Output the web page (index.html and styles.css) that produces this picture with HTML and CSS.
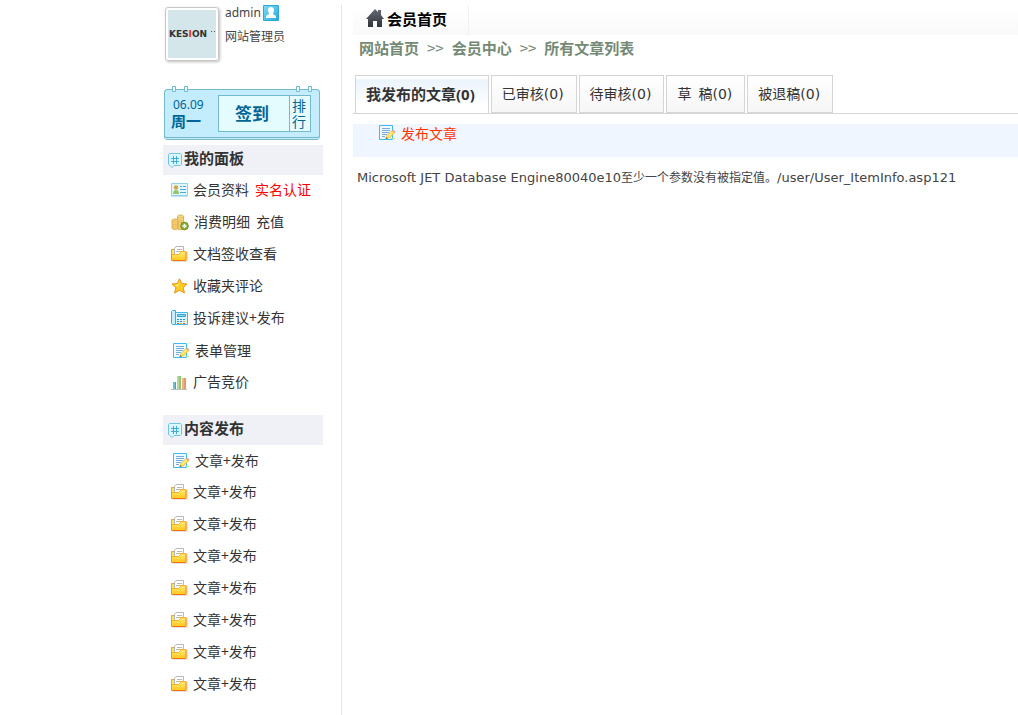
FILE: index.html
```html
<!DOCTYPE html>
<html lang="zh-CN">
<head>
<meta charset="utf-8">
<title>会员中心</title>
<link rel="stylesheet" href="styles.css">
</head>
<body>
<svg class="defs" aria-hidden="true">
  <defs>
    <linearGradient id="gold" x1="0" y1="0" x2="0" y2="1"><stop offset="0" stop-color="#ffef7a"/><stop offset="1" stop-color="#ffc61a"/></linearGradient>
    <linearGradient id="sky" x1="0" y1="0" x2="1" y2="1"><stop offset="0" stop-color="#7fdcf7"/><stop offset="1" stop-color="#27a9dc"/></linearGradient>
    <linearGradient id="slate" x1="0" y1="0" x2="0" y2="1"><stop offset="0" stop-color="#676b75"/><stop offset="1" stop-color="#30333c"/></linearGradient>
  </defs>
  <symbol id="i-hash" viewBox="0 0 14 15">
    <path d="M1.5 .5h11l1 1v10l-1 1H6l-2 2-2-2h-.5l-1-1v-10z" fill="#d9f7fe" stroke="#6fc6e4"/>
    <path d="M5.500 3v8M8.500 3v8M3 5.500h8M3 8.500h8" stroke="#42a9dc" fill="none"/>
  </symbol>
  <symbol id="i-folder" viewBox="0 0 17 16">
    <path d="M2 15.500h14.500V6" stroke="#e2e2e2" fill="none"/>
    <path d="M.5 3.500h4V14h-4z" fill="#ffe45c" stroke="#ff9c1a"/>
    <path d="M3.500 8V2.500l1.500-2h7.500v8h-9z" fill="#fff" stroke="#b3b6bc"/>
    <path d="M6 3.500h5M5 5.500h6" stroke="#b5bac2"/>
    <path d="M.5 8.500h7l2-2v-1h5.500v9H.5z" fill="url(#gold)" stroke="#ffac26"/>
    <path d="M1 14.500h14" stroke="#f8760c"/>
    <path d="M.500 8v6M15 6v8" stroke="#fc9218"/>
  </symbol>
  <symbol id="i-edit" viewBox="0 0 17 16">
    <path d="M.5.500h13v14H.5z" fill="#effaff" stroke="#3bbdf0"/>
    <path d="M3 3.500h8M3 5.500h8M3 7.500h7M3 9.500h5M3 11.500h3" stroke="#7aa9dc"/>
    <path d="M7 13.500l1-3 5-5 2.500 2.500-5 5z" fill="#ffe04a" stroke="#d8ae3c" stroke-width=".6"/>
    <path d="M9 11.500l5-5" stroke="#fff8b8"/>
    <path d="M13 5.500l1-1 2.500 2-1 1.500z" fill="#f0a08c"/>
    <path d="M6.500 14l.8-2 1.500 1.500z" fill="#5b6b36"/>
    <path d="M12 13.500h4" stroke="#b5e58a"/>
  </symbol>
  <symbol id="i-card" viewBox="0 0 17 14">
    <path d="M.5.500h16v12H.5z" fill="#e2f6fd" stroke="#8ed0ed"/>
    <circle cx="5" cy="4.500" r="2.200" fill="#d7a24a"/>
    <path d="M2 11c0-3 1-4 3-4s3 1 3 4z" fill="#97c66a"/>
    <path d="M9 3.500h2M12 3.500h3M9 6.500h6M9 9.500h6" stroke="#45a8de"/>
    <path d="M0 13.500h17" stroke="#c3e3ef"/>
  </symbol>
  <symbol id="i-coins" viewBox="0 0 18 17">
    <path d="M6.500 2.500c0-2 6-2 6 0v10h-6z" fill="#f6d67a" stroke="#d5a04a" stroke-width=".8"/>
    <path d="M1 6.500c0-2 6-2 6 0V14c0 2-6 2-6 0z" fill="#f5cf6c" stroke="#d5a04a" stroke-width=".8"/>
    <path d="M7 9.500c0-2 5-2 5 0V15c0 1-5 1-5 0z" fill="#f5cf6c" stroke="#d5a04a" stroke-width=".8"/>
    <path d="M1 7c1 1.500 5 1.500 6 0M1 9.500c1 1.500 5 1.500 6 0M1 12c1 1.500 5 1.500 6 0M6.500 3c1 1.500 5 1.500 6 0M6.500 5.500c1 1.500 5 1.500 6 0" stroke="#dfb260" stroke-width=".6" fill="none"/>
    <circle cx="13.500" cy="12" r="3.800" fill="#8fb43a" stroke="#6a8e26"/>
    <path d="M13.500 10v4M11.500 12h4" stroke="#fff" stroke-width="1.300"/>
  </symbol>
  <symbol id="i-star" viewBox="0 0 16 16">
    <path d="M8 .8l2.200 4.700 5.300.5-4 3.700 1.500 5.300-5-2.700L3 15l1.500-5.300L.5 6l5.300-.5z" fill="#ffcb22" stroke="#ea9420" stroke-linejoin="round"/>
    <path d="M8 3L6.500 6.500 3 7l3.500 2z" fill="#fff27d"/>
  </symbol>
  <symbol id="i-phone" viewBox="0 0 17 16">
    <path d="M4.500 2.500h12v12h-12z" fill="#ddf5fe" stroke="#42b9ea"/>
    <path d="M1.500.5h3v14h-3l-1-1v-12z" fill="#c8effd" stroke="#34aee4"/>
    <path d="M6.500 4.500h8v2h-8z" fill="#8cd9f6" stroke="#389fd2"/>
    <path d="M6 9.500h2M9 9.500h2M12 9.500h2M6 11.500h2M9 11.500h2" stroke="#2490d0"/>
    <path d="M12 11.500h2" stroke="#f4a825"/><path d="M6 13.500h2M12 13.500h2" stroke="#e8613c"/><path d="M9 13.500h2" stroke="#f0ba35"/>
  </symbol>
  <symbol id="i-chart" viewBox="0 0 17 15">
    <path d="M2 7h3v7H2z" fill="#72bfd8"/><path d="M4 7h1v7H4z" fill="#4ba1c4"/>
    <path d="M6 1h4v13H6z" fill="#b2d99a"/><path d="M8 1h2v13H8z" fill="#8fc678"/>
    <path d="M11 3h4v11h-4z" fill="#f0b088"/><path d="M13 3h2v11h-2z" fill="#e5996b"/>
    <path d="M0 14.500h16" stroke="#bcbcbc"/>
  </symbol>
</svg>

<div class="page">
  <aside class="side">
    <div class="profile">
      <div class="avatar">
        <svg width="48" height="48" viewBox="0 0 48 48" role="img" aria-label="KESION">
          <path d="M0 0h48v48H0z" fill="#d4e6ea"/>
          <text class="logo" x="1" y="27">KES<tspan fill="#e8301f">I</tspan>ON</text>
          <path d="M43 21.500h1M46 21.500h1" stroke="#555"/>
        </svg>
      </div>
      <div class="who">
        <div class="name">admin
          <svg width="16" height="16" viewBox="0 0 16 16" aria-hidden="true">
            <path d="M.5.500h15v15H.5z" fill="url(#sky)" stroke="#2da8d9"/>
            <path d="M5 5c0-4 6-4 6 0 0 2-1 3-1 4l3 2v2H3v-2l3-2c0-1-1-2-1-4z" fill="#fff"/>
          </svg>
        </div>
        <div>网站管理员</div>
      </div>
    </div>

    <div class="sign">
      <svg class="rings" width="156" height="7" viewBox="0 0 156 7" aria-hidden="true">
        <path d="M8.500 5.500v-5h3v5zM20.500 5.500v-5h3v5zM132.500 5.500v-5h3v5zM144.500 5.500v-5h3v5z" fill="#e8fbff" stroke="#76b8cc"/>
      </svg>
      <div class="date"><span>06.09</span><strong>周一</strong></div>
      <button class="checkin" type="button">签到</button>
      <button class="rank" type="button">排行</button>
    </div>

    <nav>
      <h2><svg width="14" height="15"><use href="#i-hash"/></svg>我的面板</h2>
      <ul>
        <li><svg width="17" height="14"><use href="#i-card"/></svg><a href="#">会员资料</a><a class="hot" href="#">实名认证</a></li>
        <li><svg width="18" height="17"><use href="#i-coins"/></svg><a href="#">消费明细</a><a href="#">充值</a></li>
        <li><svg width="17" height="16"><use href="#i-folder"/></svg><a href="#">文档签收查看</a></li>
        <li><svg width="17" height="16"><use href="#i-star"/></svg><a href="#">收藏夹评论</a></li>
        <li><svg width="17" height="16"><use href="#i-phone"/></svg><a href="#">投诉建议+发布</a></li>
        <li class="form"><svg width="17" height="16"><use href="#i-edit"/></svg><a href="#">表单管理</a></li>
        <li><svg width="17" height="15"><use href="#i-chart"/></svg><a href="#">广告竞价</a></li>
      </ul>
      <h2><svg width="14" height="15"><use href="#i-hash"/></svg>内容发布</h2>
      <ul>
        <li class="form"><svg width="17" height="16"><use href="#i-edit"/></svg><a href="#">文章+发布</a></li>
        <li><svg width="17" height="16"><use href="#i-folder"/></svg><a href="#">文章+发布</a></li>
        <li><svg width="17" height="16"><use href="#i-folder"/></svg><a href="#">文章+发布</a></li>
        <li><svg width="17" height="16"><use href="#i-folder"/></svg><a href="#">文章+发布</a></li>
        <li><svg width="17" height="16"><use href="#i-folder"/></svg><a href="#">文章+发布</a></li>
        <li><svg width="17" height="16"><use href="#i-folder"/></svg><a href="#">文章+发布</a></li>
        <li><svg width="17" height="16"><use href="#i-folder"/></svg><a href="#">文章+发布</a></li>
        <li><svg width="17" height="16"><use href="#i-folder"/></svg><a href="#">文章+发布</a></li>
      </ul>
    </nav>
  </aside>

  <main>
    <header class="bar">
      <a href="#"><svg width="18" height="18" viewBox="0 0 18 18" aria-hidden="true"><path d="M9 0l3 3V1h3v5l3 4h-2v8h-5v-6H7v6H2v-8H0z" fill="url(#slate)"/></svg>会员首页</a>
    </header>
    <div class="crumbs"><a href="#">网站首页</a><span class="sep">&gt;&gt;</span><a href="#">会员中心</a><span class="sep">&gt;&gt;</span><span>所有文章列表</span></div>
    <div class="tabs">
      <a class="on" href="#">我发布的文章(0)</a>
      <a href="#">已审核(0)</a>
      <a href="#">待审核(0)</a>
      <a href="#"><span class="wide">草</span>稿(0)</a>
      <a href="#">被退稿(0)</a>
    </div>
    <div class="tools"><a href="#"><svg width="17" height="16"><use href="#i-edit"/></svg>发布文章</a></div>
    <p class="error">Microsoft JET Database Engine80040e10<span>至少一个参数没有被指定值。</span>/user/User_ItemInfo.asp121</p>
  </main>
</div>
</body>
</html>
```

FILE: styles.css
```css
* { box-sizing: border-box; }
body {
  margin: 0;
  background: #fff;
  color: #333;
  font: 12px/18px "DejaVu Sans", "Noto Sans CJK SC", sans-serif;
}
a { color: inherit; text-decoration: none; }
svg { flex: none; }
.defs { position: absolute; width: 0; height: 0; }

.page {
  display: flex;
  min-height: 100vh;
  padding: 5px 0 0 163px;
}

.side { width: 160px; flex: none; }
.profile { display: flex; gap: 6px; padding: 2px 0 0 2px; color: #444; }
.avatar {
  width: 54px;
  height: 54px;
  padding: 2px;
  border: 1px solid #c8c8c8;
  border-radius: 3px;
  box-shadow: 1px 1px 3px #bbb;
}
.avatar svg { display: block; }
.logo { font: bold 9px "DejaVu Sans", sans-serif; fill: #333; }
.who { font-family: "Noto Sans", "Noto Sans CJK SC", sans-serif; }
.name { display: flex; align-items: center; gap: 2px; margin: -3px 0 6px; }

.sign {
  position: relative;
  display: flex;
  width: 156px;
  height: 51px;
  margin: 28px 0 5px 1px;
  padding: 5px 8px 0;
  border: 1px solid #76b8cc;
  border-bottom: 3px double #76b8cc;
  border-radius: 4px;
  background: #c3ecfc;
  color: #069;
}
.rings { position: absolute; top: -4px; left: -1px; }
.date {
  display: flex;
  flex-direction: column;
  width: 45px;
  padding-top: 1px;
  line-height: 17px;
  font-family: "Noto Sans", "Noto Sans CJK SC", sans-serif;
}
.date strong { margin-left: -2px; font-size: 15px; }
.sign button {
  height: 37px;
  padding: 0;
  border: 1px solid #76b8cc;
  background: #e5fcff;
  color: #069;
  font-family: "Noto Sans CJK SC", sans-serif;
}
.sign .checkin { width: 72px; padding: 0 4px 2px 0; font-size: 17px; font-weight: bold; }
.sign .rank { width: 22px; margin-left: -1px; padding: 0 4px 2px 2px; font-size: 14px; line-height: 16px; }

nav { font-family: "Noto Sans CJK SC", sans-serif; }
h2 {
  display: flex;
  align-items: center;
  gap: 2px;
  height: 30px;
  margin: 0;
  padding: 0 0 4px 5px;
  background: #f0f1f6;
  font-size: 15px;
}
h2 svg { margin-top: 4px; }
ul { margin: 0 0 16px; padding: 0; list-style: none; }
li {
  display: flex;
  align-items: center;
  gap: 6px;
  height: 32px;
  padding: 0 0 4px 8px;
  font-size: 14px;
  white-space: nowrap;
}
li svg { margin: 2px -1px 0 0; }
.form { padding: 0 0 2px 10px; }
.hot { color: #f00; }

main {
  flex: 1;
  min-width: 0;
  margin-left: 18px;
  padding-left: 11px;
  border-left: 1px solid #e5e5e5;
}
.bar {
  display: flex;
  height: 30px;
  background: linear-gradient(#fff, #f9f9f9);
}
.bar a {
  display: flex;
  align-items: center;
  gap: 3px;
  width: 116px;
  padding: 0 0 4px 13px;
  border-right: 1px solid #f2f2f2;
  color: #000;
  font: bold 15px "Noto Sans CJK SC", sans-serif;
}
.crumbs {
  display: flex;
  align-items: center;
  gap: 8px;
  height: 28px;
  padding: 0 0 4px 6px;
  color: #758a75;
  font: bold 15px "Noto Sans CJK SC", sans-serif;
}
.sep { font-weight: normal; }

.tabs {
  display: flex;
  gap: 2px;
  height: 39px;
  margin-top: 12px;
  padding-left: 2px;
  border-bottom: 1px solid #d5d5d5;
  font-family: "DejaVu Sans", "Noto Sans CJK SC", sans-serif;
  font-size: 14px;
}
.tabs a {
  height: 38px;
  padding: 0 12px 0 10px;
  border: 1px solid #d5d5d5;
  background: linear-gradient(#fff, #f6f6f6);
  line-height: 36px;
  white-space: nowrap;
}
.tabs .on {
  padding-right: 13px;
  border-bottom: 0;
  background: linear-gradient(#fff 2px, #ebf4fc 4px, #fff 30px);
  font-family: "Noto Sans", "Noto Sans CJK SC", sans-serif;
  font-size: 15px;
  font-weight: bold;
}
.wide { margin-right: 7px; }

.tools {
  display: flex;
  align-items: flex-start;
  height: 33px;
  margin-top: 10px;
  padding-left: 26px;
  background: #eff6ff;
}
.tools a {
  display: flex;
  align-items: center;
  gap: 5px;
  color: #ff3500;
  font: 14px/18px "Noto Sans CJK SC", sans-serif;
}
.error { margin: 12px 0 0 4px; color: #444; font-size: 13px; }
.error span { font-size: 12px; }
```
